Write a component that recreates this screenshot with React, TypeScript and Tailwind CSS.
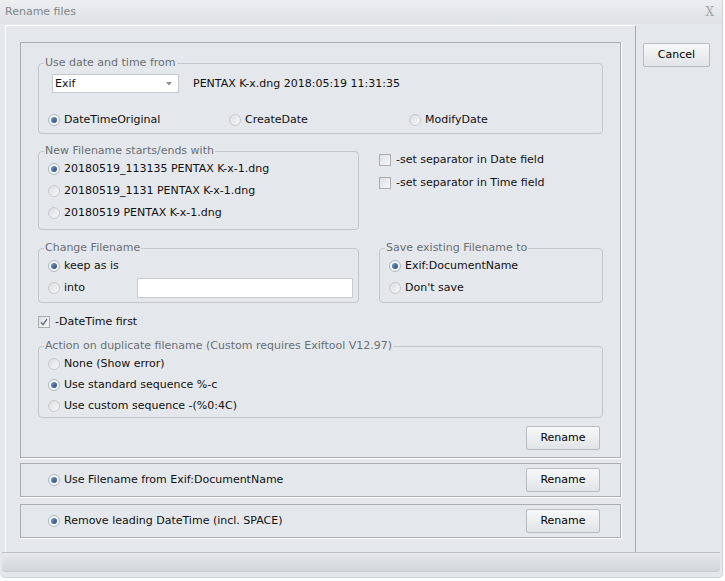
import React from "react";

function Radio({ checked }: { checked?: boolean }) {
  return (
    <span
      className={`flex h-[12px] w-[12px] shrink-0 items-center justify-center rounded-full border ${
        checked
          ? "border-[#aeb7c2] bg-[#f3f5f7]"
          : "border-[#c6cace] bg-linear-to-br from-[#dadde1] to-[#f7f8f9]"
      }`}
    >
      {checked && (
        <span className="h-[6px] w-[6px] rounded-full bg-linear-to-br from-[#7d9cc0] to-[#244a76]" />
      )}
    </span>
  );
}

function RadioItem({
  checked,
  label,
  className = "",
}: {
  checked?: boolean;
  label: string;
  className?: string;
}) {
  return (
    <label className={`flex items-center gap-[4px] ${className}`}>
      <Radio checked={checked} />
      <span>{label}</span>
    </label>
  );
}

function Check({ checked, label }: { checked?: boolean; label: string }) {
  return (
    <label className="flex items-center gap-[5px]">
      <span className="flex h-[12px] w-[12px] shrink-0 items-center justify-center border border-[#a9adb2] bg-linear-to-br from-[#dcdfe3] to-[#f7f8f9]">
        {checked && (
          <svg width="8" height="8" viewBox="0 0 8 8">
            <path d="M1 4.2 L3.1 6.6 L7 1.2" stroke="#5b6b7e" strokeWidth="1.3" fill="none" />
          </svg>
        )}
      </span>
      <span>{label}</span>
    </label>
  );
}

function Group({
  title,
  className = "",
  children,
}: {
  title: string;
  className?: string;
  children: React.ReactNode;
}) {
  return (
    <fieldset className={`rounded-[4px] border border-[#c4c8cc] ${className}`}>
      <legend className="ml-[5px] px-[1px] leading-[14px] text-[#6a6f75]">{title}</legend>
      {children}
    </fieldset>
  );
}

function Button({ label, className = "" }: { label: string; className?: string }) {
  return (
    <button
      type="button"
      className={`flex h-[24px] items-center justify-center rounded-[2px] border border-[#b8bcc1] bg-linear-to-b from-[#f7f8f9] to-[#e1e4e7] text-black ${className}`}
    >
      {label}
    </button>
  );
}

export default function App() {
  return (
    <div className="flex h-[581px] w-[725px] bg-white font-['DejaVu_Sans',sans-serif] text-[11px] leading-[14px] text-[#111]">
      <div className="flex h-[578px] w-[723px] flex-col rounded-b-[5px] border-r border-b border-[#cdd0d4] bg-[#e4e7eb]">
        {/* title bar */}
        <div className="flex h-[24px] items-center justify-between bg-linear-to-b from-[#eceef0] to-[#dee1e5] pl-[5px] pr-[8px]">
          <span className="text-[#80868c]">Rename files</span>
          <span className="font-['DejaVu_Serif',serif] text-[12px] text-[#a2a6ab]">X</span>
        </div>

        <div className="flex">
          {/* left panel */}
          <div className="mt-[1px] ml-[5px] flex h-[527px] w-[631px] flex-col border-t border-l border-r border-t-white border-l-white border-r-[#a7abb0] pt-[16px] pl-[14px]">
            <div className="flex h-[416px] w-[601px] flex-col border border-[#a9adb2] px-[17px] pt-[13px] shadow-[1px_1px_0_#ffffff]">
              <Group title="Use date and time from" className="w-[565px] pb-[6px]">
                <div className="mt-[4px] ml-[13px] flex items-center">
                  <div className="flex h-[19px] w-[127px] items-center border border-[#c5c9cd] bg-white pl-[2px]">
                    <span>Exif</span>
                    <svg className="ml-auto mr-[6px]" width="6" height="4" viewBox="0 0 6 4">
                      <path d="M0 0 H6 L3 3.5 Z" fill="#8b9096" />
                    </svg>
                  </div>
                  <span className="ml-[14px]">PENTAX K-x.dng 2018:05:19 11:31:35</span>
                </div>
                <div className="mt-[20px] flex pl-[9px]">
                  <RadioItem checked label="DateTimeOriginal" className="w-[181px]" />
                  <RadioItem label="CreateDate" className="w-[180px]" />
                  <RadioItem label="ModifyDate" />
                </div>
              </Group>

              <div className="mt-[10px] flex">
                <Group title="New Filename starts/ends with" className="w-[321px] pb-[5px]">
                  <div className="flex flex-col pl-[9px]">
                    <RadioItem checked label="20180519_113135 PENTAX K-x-1.dng" className="h-[22px]" />
                    <RadioItem label="20180519_1131 PENTAX K-x-1.dng" className="h-[22px]" />
                    <RadioItem label="20180519 PENTAX K-x-1.dng" className="h-[22px]" />
                  </div>
                </Group>
                <div className="ml-[20px] flex flex-col pt-[4px]">
                  <div className="flex h-[23px] items-center">
                    <Check label="-set separator in Date field" />
                  </div>
                  <div className="flex h-[23px] items-center">
                    <Check label="-set separator in Time field" />
                  </div>
                </div>
              </div>

              <div className="mt-[11px] flex">
                <Group title="Change Filename" className="w-[321px] pb-[3px]">
                  <div className="flex flex-col pl-[9px]">
                    <RadioItem checked label="keep as is" className="h-[22px]" />
                    <div className="flex h-[22px] items-center">
                      <RadioItem label="into" className="w-[89px]" />
                      <input
                        type="text"
                        className="h-[20px] w-[216px] border border-[#c8cbcf] bg-white px-[2px] outline-none"
                      />
                    </div>
                  </div>
                </Group>
                <Group title="Save existing Filename to" className="ml-[20px] w-[224px] pb-[3px]">
                  <div className="flex flex-col pl-[9px]">
                    <RadioItem checked label="Exif:DocumentName" className="h-[22px]" />
                    <RadioItem label="Don't save" className="h-[22px]" />
                  </div>
                </Group>
              </div>

              <div className="mt-[12px] flex h-[14px] items-center">
                <Check checked label="-DateTime first" />
              </div>

              <Group
                title="Action on duplicate filename (Custom requires Exiftool V12.97)"
                className="mt-[10px] w-[565px] pb-[1px]"
              >
                <div className="flex flex-col pl-[9px]">
                  <RadioItem label="None (Show error)" className="h-[21px]" />
                  <RadioItem checked label="Use standard sequence %-c" className="h-[21px]" />
                  <RadioItem label="Use custom sequence -(%0:4C)" className="h-[21px]" />
                </div>
              </Group>

              <Button label="Rename" className="mt-[8px] mr-[3px] w-[74px] self-end" />
            </div>

            <div className="mt-[5px] flex h-[34px] w-[601px] items-center justify-between border border-[#a9adb2] pr-[20px] pl-[27px] shadow-[1px_1px_0_#ffffff]">
              <RadioItem checked label="Use Filename from Exif:DocumentName" />
              <Button label="Rename" className="w-[74px]" />
            </div>

            <div className="mt-[7px] flex h-[34px] w-[601px] items-center justify-between border border-[#a9adb2] pr-[20px] pl-[27px] shadow-[1px_1px_0_#ffffff]">
              <RadioItem checked label="Remove leading DateTime (incl. SPACE)" />
              <Button label="Rename" className="w-[74px]" />
            </div>
          </div>

          {/* right column */}
          <div className="flex-1 pl-[7px] pt-[19px]">
            <Button label="Cancel" className="w-[67px]" />
          </div>
        </div>

        {/* bottom frame */}
        <div className="mx-[2px] h-[20px] rounded-b-[4px] border-t border-b border-t-[#bcc0c5] border-b-[#c9ccd0] bg-linear-to-b from-[#e7e9ec] via-[#dcdfe2] to-[#d3d6da]" />
      </div>
    </div>
  );
}
